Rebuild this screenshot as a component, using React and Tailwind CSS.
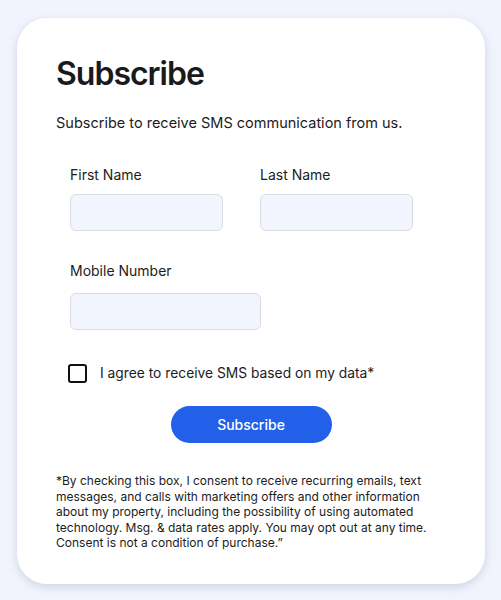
import React from 'react';

const font = { fontFamily: 'Inter, "Noto Sans", sans-serif' };

// Single labelled text input
const Field = ({ label, width, gap }) => (
  <label className="flex flex-col">
    <span className="text-[14px] leading-5 text-[#1c1c1c]">{label}</span>
    <input
      type="text"
      className={`${width} ${gap} h-[37px] rounded-md border border-[#d9dce3] bg-[#f2f5fe] outline-none`}
    />
  </label>
);

export default function App() {
  return (
    <div className="min-h-[600px] w-[501px] bg-[#f1f4fd] pt-[18px] pl-[17px]" style={font}>
      <div className="flex h-[566px] w-[468px] flex-col rounded-[30px] bg-white pt-[37px] pl-[39px] pr-[30px] shadow-[0_3px_10px_rgba(60,70,110,0.18)]">
        <h1 className="text-[32px] font-semibold leading-[38px] tracking-[-1px] text-[#1a1a1a]">Subscribe</h1>
        <p className="mt-[20px] text-[14.5px] leading-5 text-[#1c1c1c]">
          Subscribe to receive SMS communication from us.
        </p>

        <div className="mt-[32px] pl-[14px]">
          <div className="flex gap-[37px]">
            <Field label="First Name" width="w-[153px]" gap="mt-[9px]" />
            <Field label="Last Name" width="w-[153px]" gap="mt-[9px]" />
          </div>
          <div className="mt-[30px]">
            <Field label="Mobile Number" width="w-[191px]" gap="mt-[12px]" />
          </div>

          <label className="mt-[33px] flex items-center gap-[13px] -ml-[2px]">
            <span className="h-[19px] w-[19px] rounded-[3px] border-2 border-[#111]" />
            <span className="text-[13.8px] leading-5 text-[#1c1c1c]">
              I agree to receive SMS based on my data*
            </span>
          </label>
        </div>

        <div className="mt-[23px] flex justify-center pr-[9px]">
          <button className="h-[37px] w-[161px] rounded-full bg-[#2360ea] text-[14px] font-medium text-white">
            Subscribe
          </button>
        </div>

        <p className="mt-[30px] max-w-[385px] text-[12px] leading-[15.5px] text-[#1c1c1c]">
          *By checking this box, I consent to receive recurring emails, text messages, and calls with
          marketing offers and other information about my property, including the possibility of using
          automated technology. Msg. &amp; data rates apply. You may opt out at any time. Consent is not a
          condition of purchase.&rdquo;
        </p>
      </div>
    </div>
  );
}
